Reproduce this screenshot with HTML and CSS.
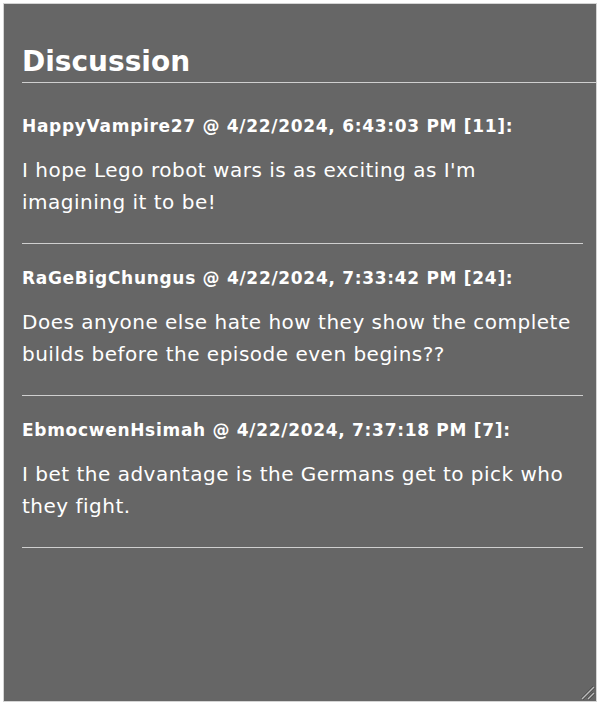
FILE: index.html
```html
<!DOCTYPE html>
<html>
<head>
<meta charset="utf-8">
<link rel="stylesheet" href="styles.css">
</head>
<body>
<div class="panel">
  <h2 class="title">Discussion</h2>
  <div class="comment">
    <div class="meta">HappyVampire27 @ 4/22/2024, 6:43:03 PM [11]:</div>
    <p class="text">I hope Lego robot wars is as exciting as I'm imagining it to be!</p>
  </div>
  <div class="comment">
    <div class="meta">RaGeBigChungus @ 4/22/2024, 7:33:42 PM [24]:</div>
    <p class="text">Does anyone else hate how they show the complete builds before the episode even begins??</p>
  </div>
  <div class="comment">
    <div class="meta">EbmocwenHsimah @ 4/22/2024, 7:37:18 PM [7]:</div>
    <p class="text">I bet the advantage is the Germans get to pick who they fight.</p>
  </div>
  <svg class="grip" width="14" height="14" viewBox="0 0 14 14">
    <path d="M1 13 L13 1" stroke="#444" stroke-width="3"/>
    <path d="M1 13 L13 1" stroke="#bdbdbd" stroke-width="1.4"/>
    <path d="M7 13 L13 7" stroke="#444" stroke-width="3"/>
    <path d="M7 13 L13 7" stroke="#bdbdbd" stroke-width="1.4"/>
  </svg>
</div>
</body>
</html>
```

FILE: styles.css
```css
html, body {
  margin: 0;
  padding: 0;
  background: #ffffff;
}
body {
  padding: 3px;
  font-family: "DejaVu Sans", Verdana, sans-serif;
  color: #ffffff;
}
.panel {
  position: relative;
  box-sizing: border-box;
  height: 699px;
  background: #666666;
  border: 1px solid #d4d4d4;
  padding: 0 0 0 18px;
  overflow: hidden;
}
.title {
  margin: 41px 0 9px 0;
  padding-bottom: 3px;
  font-size: 28px;
  line-height: 34px;
  font-weight: bold;
  border-bottom: 1px solid #cfcfcf;
}
.comment {
  margin-right: 13px;
  padding: 23.5px 0 25px 0;
  border-bottom: 1px solid #cfcfcf;
}
.meta {
  font-size: 17px;
  line-height: 20px;
  font-weight: bold;
  letter-spacing: 0.7px;
}
.text {
  margin: 18.5px 0 0 0;
  padding-right: 6px;
  font-size: 20px;
  line-height: 32px;
  letter-spacing: 0.5px;
}
.grip {
  position: absolute;
  right: 1px;
  bottom: 1px;
  display: block;
}
```
